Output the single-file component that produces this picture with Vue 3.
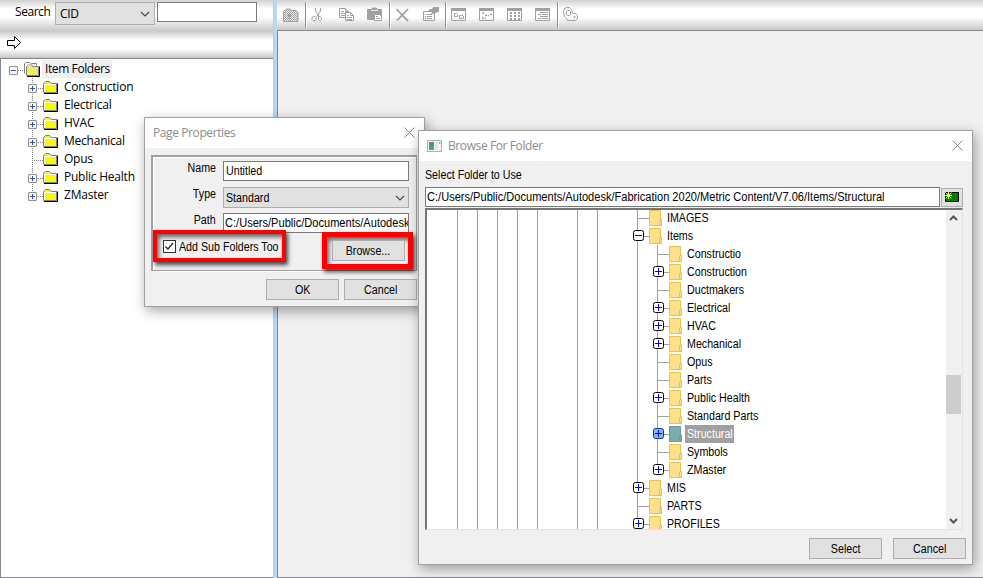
<script setup>
import { ref } from 'vue';

const searchType = ref('CID');
const pageName = ref('Untitled');
const addSubFolders = ref(true);

// left hand item tree
const itemFolders = [
  { name: 'Construction', expandable: true },
  { name: 'Electrical', expandable: true },
  { name: 'HVAC', expandable: true },
  { name: 'Mechanical', expandable: true },
  { name: 'Opus', expandable: false },
  { name: 'Public Health', expandable: true },
  { name: 'ZMaster', expandable: true }
];

// parent levels which still have siblings further down
const guides = [true, true, true, true, true, false, true, true, false];

const diskFolders = [
  { name: 'IMAGES', level: 0 },
  { name: 'Items', level: 0, box: '-' },
  { name: 'Constructio', level: 1 },
  { name: 'Construction', level: 1, box: '+' },
  { name: 'Ductmakers', level: 1 },
  { name: 'Electrical', level: 1, box: '+' },
  { name: 'HVAC', level: 1, box: '+' },
  { name: 'Mechanical', level: 1, box: '+' },
  { name: 'Opus', level: 1 },
  { name: 'Parts', level: 1 },
  { name: 'Public Health', level: 1, box: '+' },
  { name: 'Standard Parts', level: 1 },
  { name: 'Structural', level: 1, box: '+', selected: true },
  { name: 'Symbols', level: 1 },
  { name: 'ZMaster', level: 1, box: '+', last: true },
  { name: 'MIS', level: 0, box: '+' },
  { name: 'PARTS', level: 0 },
  { name: 'PROFILES', level: 0, box: '+' }
];
</script>

<template>
  <div class="app">
    <aside class="sidebar">
      <div class="search-bar">
        <span class="search-label">Search</span>
        <div class="search-select">
          <span>{{ searchType }}</span>
          <svg width="10" height="6" viewBox="0 0 10 6"><path d="M1 1l4 4 4-4" fill="none" stroke="#444" stroke-width="1.1" /></svg>
        </div>
        <div class="search-input"></div>
      </div>
      <div class="arrow-bar">
        <svg width="15" height="14" viewBox="0 0 15 14"><path d="M.5 4.500h7v-4l6 6-6 6v-3h-7z" fill="#fff" stroke="#000" /></svg>
      </div>
      <div class="item-tree">
        <div class="tree-row root">
          <span class="expander minus"></span>
          <i class="dots"></i>
          <svg class="root-icon" width="18" height="16" viewBox="0 0 18 16">
            <path d="M1.500 12.500v-10l1-1h4l1 1h6v2" fill="#fff" stroke="#808080" />
            <path d="M3.500 14.500v-9l2-2h3l1 2h6v9z" fill="url(#hatch)" stroke="#808080" />
            <path d="M2.500 14V5l2-2h4" fill="none" stroke="#fff" />
            <path d="M4 15.500h12.500v-10" fill="none" stroke="#000" />
          </svg>
          <span class="tree-name root-name">Item Folders</span>
        </div>
        <div v-for="f in itemFolders" :key="f.name" class="tree-row child">
          <div class="branch" :class="{ end: f.name === 'ZMaster' }">
            <span v-if="f.expandable" class="expander"></span>
          </div>
          <svg width="16" height="14" viewBox="0 0 16 14">
            <path d="M.5 12.500v-9l2-2h4l2 2h5v9z" fill="url(#hatch)" stroke="#808080" />
            <path d="M1.500 11.500v-7h11" fill="none" stroke="#fff" />
            <path d="M1 13.500h13.500v-10" fill="none" stroke="#000" />
          </svg>
          <span class="tree-name">{{ f.name }}</span>
        </div>
      </div>
    </aside>
    <div class="splitter"></div>
    <main class="workspace">
      <div class="toolbar">
        <svg class="tool" viewBox="0 0 16 16">
          <path d="M.5 14.500v-10l1-1h1l1-1.500h4l1 1.500h5l1.500 1.500v9.500z" fill="url(#dither)" stroke="#a0a0a0" />
          <path d="M6.500 6v6M4.500 8.500h4" stroke="#a0a0a0" stroke-width="1.500" />
        </svg>
        <i class="sep"></i>
        <svg class="tool cut" viewBox="0 0 16 16"><path d="M4.500 1v3l4 6M9.500 1v3l-4 6M3 9.500h1l1 1v2l-1 1h-2l-1-1v-2zM8.500 9.500h1l1 1v2l-1 1h-1l-1-1v-3z" /></svg>
        <svg class="tool" viewBox="0 0 16 16">
          <path d="M.5 1.500h6l3 3v6h-9zM6.500 1.500v3h3M2 4.500h3M2 6.500h5M2 8.500h4" />
          <path d="M6.500 5.500h5l3 3v5h-8z" fill="#fff" /><path d="M11.500 5.500v3h3M8 8.500h2M8 10.500h5M8 12.500h5" />
        </svg>
        <svg class="tool" viewBox="0 0 16 16">
          <path d="M.5 2.500h4l1-1.500h4l1 1.500h4v10H.5z" fill="#a0a0a0" />
          <path d="M4 3.500h7" stroke="#eee" />
          <path d="M7.500 7.500h5l2 2v4h-7zM9 9.500h2M9 11.500h4" fill="#fff" />
        </svg>
        <i class="sep"></i>
        <svg class="tool" viewBox="0 0 16 16"><path d="M1.500 2l9 9.500 2.500 2.500M13 2L3 12.500l-1.500.5" stroke-width="1.800" /></svg>
        <svg class="tool" viewBox="0 0 16 16">
          <path d="M.5 4.500h11v9H.5zM2 7.500h1M4 7.500h5M2 9.500h1M4 9.500h5M2 11.500h1M4 11.500h5" />
          <path d="M4 5l3-3h2l1-2h6v5h-2l-3 2H8l1-2z" fill="#a0a0a0" stroke="none" />
        </svg>
        <i class="sep"></i>
        <svg class="tool" viewBox="0 0 16 16"><path d="M.5 1.500h14v12H.5z" /><path d="M0 1h15v3H0z" fill="#a0a0a0" stroke="none" /><path d="M3.500 6.500h2l1 1v2h-3zM8.500 8.500h3l1 1v2h-4z" /></svg>
        <svg class="tool" viewBox="0 0 16 16"><path d="M.5 1.500h14v12H.5z" /><path d="M0 1h15v3H0z" fill="#a0a0a0" stroke="none" /><path d="M3 6h2M6 8.500h2M9 8.500h1M11 7.500h2M3 11h2M6 11.500h1" stroke-width="1.500" /></svg>
        <svg class="tool" viewBox="0 0 16 16"><path d="M.5 1.500h14v12H.5z" /><path d="M0 1h15v3H0z" fill="#a0a0a0" stroke="none" /><path d="M3 6h10M3 9h10M3 12h10" stroke-width="2" stroke-dasharray="2 2" /></svg>
        <svg class="tool" viewBox="0 0 16 16"><path d="M.5 1.500h14v12H.5z" /><path d="M0 1h15v3H0z" fill="#a0a0a0" stroke="none" /><path d="M5 5.500h8M3 7.500h3M7 7.500h6M5 9.500h8M3 11.500h3M7 11.500h6" /></svg>
        <i class="sep last"></i>
        <svg class="tool" viewBox="0 0 16 16"><path d="M3.500.5h3l2 2 1 4h3l2 2v3l-2 2h-8l-1-2-2-2-1-5 1-3zM4.500 3.500h2l1 1v3l-1 1h-2l-1-1v-3zM11 9.500h1v1h-1z" /></svg>
      </div>
      <div class="canvas"></div>
    </main>

    <section class="window page-props">
      <header class="titlebar">
        <span>Page Properties</span>
        <svg class="close" width="11" height="11" viewBox="0 0 11 11"><path d="M.5.5l10 10M10.500.5l-10 10" /></svg>
      </header>
      <div class="group">
        <div class="field">
          <label><span class="t right">Name</span></label>
          <div class="input"><span class="t">{{ pageName }}</span></div>
        </div>
        <div class="field type">
          <label><span class="t right">Type</span></label>
          <div class="input dropdown">
            <span class="t">Standard</span>
            <svg width="10" height="6" viewBox="0 0 10 6"><path d="M1 1l4 4 4-4" fill="none" stroke="#444" stroke-width="1.100" /></svg>
          </div>
        </div>
        <div class="field path">
          <label><span class="t right">Path</span></label>
          <div class="input"><span class="t wide">C:/Users/Public/Documents/Autodesk</span></div>
        </div>
        <div class="options">
          <div class="marked sub">
            <span class="checkbox">
              <svg v-if="addSubFolders" width="11" height="11" viewBox="0 0 11 11"><path d="M1.500 5.500l2.500 2.500 5-6" fill="none" stroke="#222" stroke-width="1.300" /></svg>
            </span>
            <span class="t">Add Sub Folders Too</span>
          </div>
          <div class="marked browse">
            <button><span class="t mid">Browse...</span></button>
          </div>
        </div>
      </div>
      <footer class="actions">
        <button><span class="t mid">OK</span></button>
        <button><span class="t mid">Cancel</span></button>
      </footer>
    </section>

    <section class="window browser">
      <header class="titlebar">
        <svg width="15" height="12" viewBox="0 0 15 12">
          <path d="M.5.5h14v11H.5z" fill="#f4f4f4" stroke="#a9b2b8" />
          <path d="M2 2h5v8H2z" fill="url(#appfill)" /><path d="M8 2h3v8H8z" fill="#dfe5e8" /><path d="M12 2h1.500v2H12z" fill="#7fc095" />
        </svg>
        <span>Browse For Folder</span>
        <svg class="close" width="11" height="11" viewBox="0 0 11 11"><path d="M.5.5l10 10M10.500.5l-10 10" /></svg>
      </header>
      <div class="browser-body">
        <div class="caption"><span class="t">Select Folder to Use</span></div>
        <div class="path-row">
          <div class="input"><span class="t wide">C:/Users/Public/Documents/Autodesk/Fabrication 2020/Metric Content/V7.06/Items/Structural</span></div>
          <div class="new-folder">
            <svg width="16" height="13" viewBox="0 0 16 13">
              <path d="M1.500 1.500h13v9h-13z" fill="#008000" stroke="#000" />
              <path d="M4.500 1v7M1 4.500h7M1.500 1.500l6 6M7.500 1.500l-6 6" stroke="#ff0" />
              <path d="M3.500 3.500h2v2h-2z" fill="#ff8" />
            </svg>
          </div>
        </div>
        <div class="disk-tree">
          <div class="rows">
            <div v-for="(f, i) in diskFolders" :key="i" class="disk-row">
              <i v-for="(g, n) in guides" :key="n" class="cell" :class="{ line: g }"></i>
              <i v-if="f.level" class="cell line"></i>
              <i class="cell line tick" :class="{ end: f.last }">
                <svg v-if="f.box" width="11" height="11" viewBox="0 0 11 11" :class="{ on: f.selected }">
                  <rect x=".5" y=".5" width="10" height="10" rx="2" />
                  <path :d="f.box === '+' ? 'M2 5.500h7M5.500 2v7' : 'M2 5.500h7'" />
                </svg>
              </i>
              <svg class="folder" :class="{ on: f.selected }" width="14" height="16" viewBox="0 0 14 16">
                <path d="M.5.5h11v9h1v6H.5z" /><path d="M10.500 15v-5l2-1v6z" />
              </svg>
              <span class="disk-name" :class="{ on: f.selected }"><span class="t">{{ f.name }}</span></span>
            </div>
          </div>
          <div class="scrollbar">
            <svg width="9" height="6" viewBox="0 0 9 6"><path d="M1 5l3.500-3.500L8 5" /></svg>
            <i class="thumb"></i>
            <svg width="9" height="6" viewBox="0 0 9 6"><path d="M1 1l3.500 3.500L8 1" /></svg>
          </div>
        </div>
        <footer class="actions">
          <button><span class="t mid">Select</span></button>
          <button><span class="t mid">Cancel</span></button>
        </footer>
      </div>
    </section>

    <svg width="0" height="0" class="defs">
      <defs>
        <pattern id="hatch" width="2" height="2" patternUnits="userSpaceOnUse">
          <rect width="2" height="2" fill="#ff0" /><rect width="1" height="1" fill="#e8e860" /><rect x="1" y="1" width="1" height="1" fill="#e8e860" />
        </pattern>
        <pattern id="dither" width="2" height="2" patternUnits="userSpaceOnUse">
          <rect width="2" height="2" fill="#eee" /><rect width="1" height="1" fill="#a0a0a0" /><rect x="1" y="1" width="1" height="1" fill="#a0a0a0" />
        </pattern>
        <linearGradient id="appfill" x1="0" y1="0" x2="0" y2="1">
          <stop offset="0" stop-color="#4d85b0" /><stop offset="1" stop-color="#4fa878" />
        </linearGradient>
      </defs>
    </svg>
  </div>
</template>

<style>
body {
  margin: 0;
  overflow: hidden;
}
</style>

<style scoped>
* {
  box-sizing: border-box;
}

.app {
  position: relative;
  display: flex;
  width: 983px;
  height: 578px;
  overflow: hidden;
  background: #fff;
  font: 12px "Open Sans", sans-serif;
  color: #000;
}

svg {
  display: block;
  flex: none;
}

.defs {
  position: absolute;
}

/* Sidebar */
.sidebar {
  display: flex;
  flex-direction: column;
  width: 274px;
  border-right: 1px solid #c8c8c8;
}

.search-bar {
  display: flex;
  align-items: flex-start;
  height: 31px;
  padding: 2px 0 0 15px;
  background: linear-gradient(#d2d2d2, #fff 9px, #fff 17px, #c8c8c8);
}

.search-label {
  width: 40px;
  line-height: 20px;
  letter-spacing: -0.45px;
}

.search-select {
  display: flex;
  align-items: center;
  justify-content: space-between;
  width: 100px;
  height: 23px;
  padding: 0 4px;
  border: 1px solid #adadad;
  background: #e1e1e1;
  letter-spacing: -0.3px;
}

.search-input {
  width: 100px;
  height: 20px;
  margin-left: 2px;
  border: 1px solid #7a7a7a;
  background: #fff;
}

.arrow-bar {
  height: 27px;
  padding: 5px 0 0 7px;
  background: linear-gradient(#c8c8c8, #fff 9px, #fff 18px, #c8c8c8);
}

.item-tree {
  flex: 1;
  padding: 1px 0 0 8px;
  border: 1px solid #828790;
  border-right: none;
}

.tree-row {
  display: flex;
  align-items: center;
  height: 18px;
}

.tree-name {
  line-height: 18px;
  letter-spacing: -0.23px;
}

.root-name {
  margin-left: 1px;
  padding: 0 2px 0 3px;
  background: #f0f0f0;
  letter-spacing: -0.4px;
}

.expander {
  width: 9px;
  height: 9px;
  margin-top: 2px;
  border: 1px solid #919191;
  border-radius: 1px;
  background:
    linear-gradient(#3553a4, #3553a4) 1px 3px / 5px 1px no-repeat,
    linear-gradient(#3553a4, #3553a4) 3px 1px / 1px 5px no-repeat,
    #f4f4f4;
}

.expander.minus {
  background: linear-gradient(#3553a4, #3553a4) 1px 3px / 5px 1px no-repeat, #f4f4f4;
}

.dots {
  width: 5px;
  height: 1px;
  margin-top: 2px;
  border-top: 1px dotted #808080;
}

.branch {
  display: flex;
  align-items: center;
  width: 15px;
  height: 18px;
  margin-left: 19px;
  background:
    repeating-linear-gradient(#808080 0 1px, transparent 1px 2px) 4px 0 / 1px 18px no-repeat,
    repeating-linear-gradient(90deg, #808080 0 1px, transparent 1px 2px) 4px 10px / 11px 1px no-repeat;
}

.branch.end {
  background:
    repeating-linear-gradient(#808080 0 1px, transparent 1px 2px) 4px 0 / 1px 10px no-repeat,
    repeating-linear-gradient(90deg, #808080 0 1px, transparent 1px 2px) 4px 10px / 11px 1px no-repeat;
}

.child .tree-name {
  margin-left: 5px;
}

.splitter {
  width: 3px;
  background: #b9d8f2;
}

/* Workspace */
.workspace {
  display: flex;
  flex: 1;
  flex-direction: column;
}

.toolbar {
  display: flex;
  align-items: flex-start;
  height: 30px;
  padding: 7px 0 0 6px;
  background: linear-gradient(#d2d2d2, #fff 9px, #fff 17px, #c8c8c8);
}

.tool {
  width: 16px;
  height: 16px;
  margin-right: 12px;
  overflow: visible;
  fill: none;
  stroke: #a0a0a0;
}

.sep {
  width: 2px;
  height: 26px;
  margin: -5px 6px 0 -6px;
  border-left: 1px solid #909090;
  border-right: 1px solid #fff;
}

.sep + .tool {
  margin-left: -2px;
}

.canvas {
  flex: 1;
  border: 1px solid #828790;
  border-right: none;
  background: #f0f0f0;
}

/* Windows */
.window {
  position: absolute;
  border: 1px solid #a0a0a0;
  background: #f0f0f0;
  box-shadow: 2px 4px 12px rgba(0, 0, 0, 0.35);
  font-family: "Liberation Sans", sans-serif;
}

.page-props {
  left: 144px;
  top: 117px;
  width: 281px;
  height: 190px;
}

.browser {
  left: 418px;
  top: 130px;
  width: 555px;
  height: 435px;
}

/* dialog face is a condensed sans */
.t {
  display: inline-block;
  flex: none;
  white-space: nowrap;
  transform: scaleX(0.89);
  transform-origin: left;
}

.t.wide {
  transform: scaleX(0.922);
}

.t.mid {
  transform-origin: center;
}

.t.right {
  transform-origin: right;
}

.titlebar {
  display: flex;
  align-items: center;
  height: 30px;
  padding: 0 9px 1px 8px;
  background: #fff;
  color: #8c8c8c;
  font-family: "Open Sans", sans-serif;
  letter-spacing: -0.4px;
}

.browser .titlebar {
  gap: 6px;
}

.close {
  margin-left: auto;
  fill: none;
  stroke: #8a8a8a;
}

.group {
  width: 266px;
  height: 116px;
  margin: 7px 0 0 6px;
  padding: 4px 0 0;
  border: 2px solid #a0a0a0;
  border-bottom: 1px solid #a0a0a0;
  border-right-width: 1px;
  box-shadow: 0 1px 0 #fff, inset 1px 1px 0 #fff;
}

.field {
  display: flex;
  height: 26px;
}

.field label {
  width: 63px;
  margin-right: 7px;
  line-height: 15px;
  text-align: right;
}

.input {
  display: flex;
  align-items: center;
  width: 186px;
  height: 20px;
  padding-left: 2px;
  overflow: hidden;
  border: 1px solid #7a7a7a;
  background: #fff;
}

.path .input {
  padding-left: 1px;
}

.dropdown {
  justify-content: space-between;
  height: 21px;
  padding-right: 3px;
  border-color: #adadad;
  background: #e1e1e1;
}

.options {
  position: relative;
  display: flex;
  justify-content: space-between;
  margin-top: -9px;
}

.marked {
  display: flex;
  align-items: center;
  border: 4px solid #f00;
  box-shadow: 2px 3px 4px rgba(0, 0, 0, 0.7), inset 2px 3px 4px rgba(0, 0, 0, 0.6);
}

.sub {
  width: 133px;
  height: 32px;
  padding: 1px 0 0 6px;
}

.sub .t {
  margin-right: -20px;
}

.checkbox {
  flex: none;
  width: 13px;
  height: 13px;
  margin-right: 3px;
  border: 1px solid #333;
  background: #fff;
}

.browse {
  width: 91px;
  height: 37px;
  margin: 2px 3px 0 0;
  padding-left: 5px;
  border-width: 5px;
}

button {
  width: 73px;
  height: 21px;
  padding: 0;
  border: 1px solid #adadad;
  background: #e1e1e1;
  color: #000;
  font: inherit;
}

.actions {
  display: flex;
  justify-content: flex-end;
  gap: 5px;
  padding: 8px 7px 0 0;
}

/* Folder browser */
.browser-body {
  padding: 0 0 0 6px;
}

.caption {
  height: 26px;
  line-height: 29px;
}

.path-row {
  display: flex;
  gap: 1px;
  height: 21px;
}

.path-row .input {
  width: 515px;
  padding-left: 1px;
}

.new-folder {
  display: flex;
  justify-content: center;
  width: 22px;
  height: 19px;
  padding-top: 2px;
  margin-top: 1px;
  border: 1px solid #adadad;
  background: #e1e1e1;
}

.disk-tree {
  display: flex;
  width: 538px;
  height: 322px;
  border: 1px solid #a0a0a0;
  border-top: 2px solid #767676;
  border-left: 2px solid #767676;
  border-right-color: #e3e3e3;
  border-bottom-color: #e3e3e3;
  background: #fff;
}

.rows {
  flex: 1;
  padding-left: 20px;
  overflow: hidden;
}

.disk-row {
  display: flex;
  align-items: center;
  height: 18px;
}

.rows .disk-row:first-child {
  margin-top: -1px;
}

.cell {
  display: flex;
  align-items: center;
  width: 20px;
  height: 18px;
}

.cell.line {
  background: linear-gradient(#a0a0a0, #a0a0a0) 10px 0 / 1px 18px no-repeat;
}

.cell.tick {
  width: 22px;
  padding: 0 0 1px 6px;
  background:
    linear-gradient(#a0a0a0, #a0a0a0) 10px 0 / 1px 18px no-repeat,
    linear-gradient(#a0a0a0, #a0a0a0) 10px 9px / 12px 1px no-repeat;
}

.cell.tick.end {
  background:
    linear-gradient(#a0a0a0, #a0a0a0) 10px 0 / 1px 9px no-repeat,
    linear-gradient(#a0a0a0, #a0a0a0) 10px 9px / 12px 1px no-repeat;
}

.cell rect {
  fill: #fff;
  stroke: #000;
}

.cell path {
  stroke: #00f;
}

.cell .on rect {
  fill: #7fb8ec;
  stroke: #123c66;
}

.folder {
  margin-top: -1px;
  fill: #ffe08a;
  stroke: #e8c34d;
}

.folder.on {
  fill: #7badb0;
  stroke: #6b9c98;
}

.disk-name {
  height: 18px;
  margin-left: 2px;
  padding: 0 2px;
  line-height: 18px;
}

.disk-name.on {
  width: 49px;
  background: #a0a0a0;
  color: #fff;
}

.scrollbar {
  display: flex;
  flex-direction: column;
  align-items: center;
  width: 16px;
  padding: 5px 1px 5px 0;
  background: #f0f0f0;
}

.scrollbar path {
  fill: none;
  stroke: #555;
  stroke-width: 2;
}

.thumb {
  width: 15px;
  height: 39px;
  margin: 154px 0 auto;
  background: #cdcdcd;
}

.browser .actions {
  gap: 11px;
  padding: 8px 6px 0 0;
}
</style>
